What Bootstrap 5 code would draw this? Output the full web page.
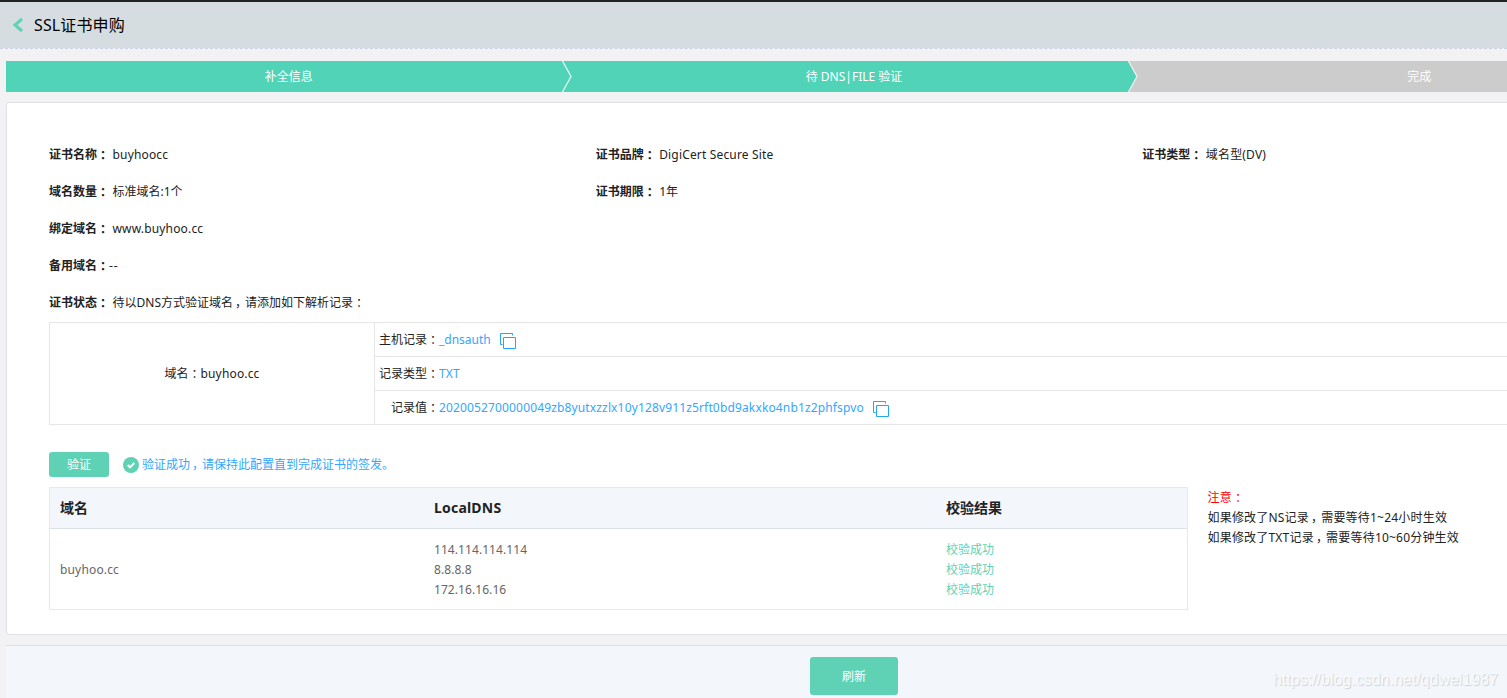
<!DOCTYPE html>
<html lang="zh-CN">
<head>
<meta charset="utf-8">
<meta name="viewport" content="width=device-width, initial-scale=1">
<title>SSL证书申购</title>
<link href="https://cdn.jsdelivr.net/npm/bootstrap@5.3.0/dist/css/bootstrap.min.css" rel="stylesheet">
<style>
body{background:#f2f2f4;color:#222;font-family:"Noto Sans","Noto Sans CJK SC",sans-serif;font-size:12px;line-height:20px}
.viewport{height:698px}
.page-wide{width:1702px;height:698px}
.title-bar{height:49px;border-top:2px solid #222;border-bottom:1px dashed #c9d3e3;background:#d5dde0;background-clip:padding-box;padding-left:12px}
.title-bar h1{font-size:16px;line-height:24px;color:#000;letter-spacing:.12px;margin-left:10px}
.steps{height:31px;margin:12px 0 10px 6px;color:#fff;line-height:31px}
.step-item{background:#51d3b7;flex:1 1 0}
.step-todo{background:#ccc}
.step-arrow{right:-1px;top:0;z-index:1}
.panel{margin-left:6px;height:533px;background:#fff;border:1px solid #dfe0e5;border-radius:3px;padding:33px 12px 0 42px}
.info-line{height:37px;line-height:37px}
.info-line b{margin-right:3.500px}
.info-value{letter-spacing:.16px}
.dashes{letter-spacing:.9px}
.colon{font-family:"Noto Sans CJK TC","Noto Sans CJK SC",sans-serif;line-height:1;vertical-align:-1px}
.comma{padding-left:2px;margin-right:-2px}
.rec{border:1px solid #e6e6e6;margin-top:1px;height:103px}
.rec-name{width:325px;border-right:1px solid #e6e6e6}
.rec-line{height:34px;line-height:33px;padding-left:4px;border-bottom:1px solid #e6e6e6}
.rec-line:last-child{border-bottom:0}
.blue{color:#32a7ff}
.token{letter-spacing:.147px}
.rec-label{width:60px;text-align:right;white-space:nowrap}
.verify{height:25px;margin-top:27px}
.verify-ok{margin-left:14px}
.verify-text{margin-left:3px}
.btn-mint{background:#5fd2b5;color:#fff;border:0;border-radius:3px;font-size:12px;padding:0}
.btn-mint:hover{background:#51c7aa;color:#fff}
.btn-verify{width:60px;height:25px}
.btn-refresh{width:88px;height:38px;padding-top:2px}
.dns{width:1139px;margin-top:10px;height:123px;border:1px solid #e8e8ea;color:#666}
.dns-grid{display:grid;grid-template-columns:374px 512px 1fr;padding-left:10px;align-items:center}
.dns-head{height:41px;background:#f3f6fb;border-bottom:1px solid #dbe3ea;color:#222;font-size:14px;font-weight:700}
.dns-host{letter-spacing:.2px}
.dns-body{height:80px;padding-top:2px}
.dns-ip{letter-spacing:.07px}
.mint{color:#5fd2b5}
.note{margin:11px 0 0 19.500px;letter-spacing:.2px}
.note-title{color:#f00}
.foot{margin:10px 0 0 6px;height:53px;background:#f3f6fb;border-top:1px solid #dbdfe5;padding-top:11px}
.site-mark{right:9px;bottom:6px;font:16px/24px "Liberation Sans",sans-serif;color:#f8fafc;text-shadow:1px 1px 1px #cdd0d4}
</style>
</head>
<body>
<div class="viewport w-100 overflow-hidden position-relative">
<div class="page-wide">
  <header class="title-bar d-flex align-items-center">
    <svg width="12" height="16" viewBox="0 0 12 16" fill="none" stroke="#5fd2b5" stroke-width="3"><path d="M10 2 3 8l7 6"/></svg>
    <h1 class="mb-0 fw-normal">SSL证书申购</h1>
  </header>
  <div class="steps d-flex text-center">
    <div class="step-item position-relative">补全信息
      <svg class="step-arrow position-absolute" width="10" height="31"><path d="M.5 0 9 15.500.5 31" fill="none" stroke="#e8f5f3" stroke-width="1.3"/></svg>
    </div>
    <div class="step-item position-relative">待 DNS|FILE 验证
      <svg class="step-arrow position-absolute" width="10" height="31"><path d="M0 0H10V31H0Z" fill="#ccc"/><path d="M0 0 9 15.500 0 31Z" fill="#51d3b7"/><path d="M.5 0 9 15.500.5 31" fill="none" stroke="#eee" stroke-width="1.3"/></svg>
    </div>
    <div class="step-item step-todo">完成</div>
  </div>
  <main class="panel">
    <div class="row g-0 info-line"><div class="col-4"><b>证书名称<span class="colon" lang="zh-TW">：</span></b><span class="info-value">buyhoocc</span></div><div class="col-4"><b>证书品牌<span class="colon" lang="zh-TW">：</span></b><span class="info-value">DigiCert Secure Site</span></div><div class="col-4"><b>证书类型<span class="colon" lang="zh-TW">：</span></b><span class="info-value">域名型(DV)</span></div></div>
    <div class="row g-0 info-line"><div class="col-4"><b>域名数量<span class="colon" lang="zh-TW">：</span></b><span>标准域名:1个</span></div><div class="col-4"><b>证书期限<span class="colon" lang="zh-TW">：</span></b><span>1年</span></div></div>
    <div class="info-line"><b>绑定域名<span class="colon" lang="zh-TW">：</span></b><span class="info-value">www.buyhoo.cc</span></div>
    <div class="info-line"><b class="me-0">备用域名<span class="colon" lang="zh-TW">：</span></b><span class="dashes">--</span></div>
    <div class="info-line"><b>证书状态<span class="colon" lang="zh-TW">：</span></b><span>待以DNS方式验证域名<span class="comma">，</span>请添加如下解析记录<span class="colon" lang="zh-TW">：</span></span></div>
    <div class="rec d-flex">
      <div class="rec-name d-flex align-items-center justify-content-center"><div>域名<span class="colon" lang="zh-TW">：</span><span class="info-value">buyhoo.cc</span></div></div>
      <div class="flex-grow-1">
        <div class="rec-line d-flex"><span class="rec-label">主机记录<span class="colon" lang="zh-TW">：</span></span><span class="blue">_dnsauth</span>
          <svg class="ms-2 mt-2" width="18" height="18" fill="none" stroke="#22a7f2"><path d="M3.500 13.500H1.500V2.500H13.500V4.500M4.500 6.500H16.500V17.500H4.500Z"/></svg></div>
        <div class="rec-line d-flex"><span class="rec-label">记录类型<span class="colon" lang="zh-TW">：</span></span><span class="blue token">TXT</span></div>
        <div class="rec-line d-flex"><span class="rec-label">记录值<span class="colon" lang="zh-TW">：</span></span><span class="blue token">2020052700000049zb8yutxzzlx10y128v911z5rft0bd9akxko4nb1z2phfspvo</span>
          <svg class="ms-2 mt-2" width="18" height="18" fill="none" stroke="#22a7f2"><path d="M3.500 13.500H1.500V2.500H13.500V4.500M4.500 6.500H16.500V17.500H4.500Z"/></svg></div>
      </div>
    </div>
    <div class="verify d-flex align-items-center">
      <button class="btn btn-mint btn-verify" type="button">验证</button>
      <svg class="verify-ok" width="16" height="16"><circle cx="8" cy="8" r="8" fill="#5fd2b5"/><path d="m4.700 8 2.300 2.300L11.400 6" fill="none" stroke="#fff" stroke-width="2"/></svg>
      <span class="blue verify-text">验证成功<span class="comma">，</span>请保持此配置直到完成证书的签发。</span>
    </div>
    <div class="d-flex align-items-start">
      <div class="dns">
        <div class="dns-grid dns-head"><div>域名</div><div class="dns-host">LocalDNS</div><div>校验结果</div></div>
        <div class="dns-grid dns-body"><div class="info-value">buyhoo.cc</div><div class="dns-ip">114.114.114.114<br>8.8.8.8<br>172.16.16.16</div><div class="mint">校验成功<br>校验成功<br>校验成功</div></div>
      </div>
      <div class="note"><div class="note-title">注意<span class="colon" lang="zh-TW">：</span></div><div>如果修改了NS记录<span class="comma">，</span>需要等待1~24小时生效</div><div>如果修改了TXT记录<span class="comma">，</span>需要等待10~60分钟生效</div></div>
    </div>
  </main>
  <footer class="foot text-center"><button class="btn btn-mint btn-refresh" type="button">刷新</button></footer>
</div>
<div class="site-mark position-absolute">https://blog.csdn.net/qdwel1987</div>
</div>
<script src="https://cdn.jsdelivr.net/npm/bootstrap@5.3.0/dist/js/bootstrap.bundle.min.js"></script>
</body>
</html>
